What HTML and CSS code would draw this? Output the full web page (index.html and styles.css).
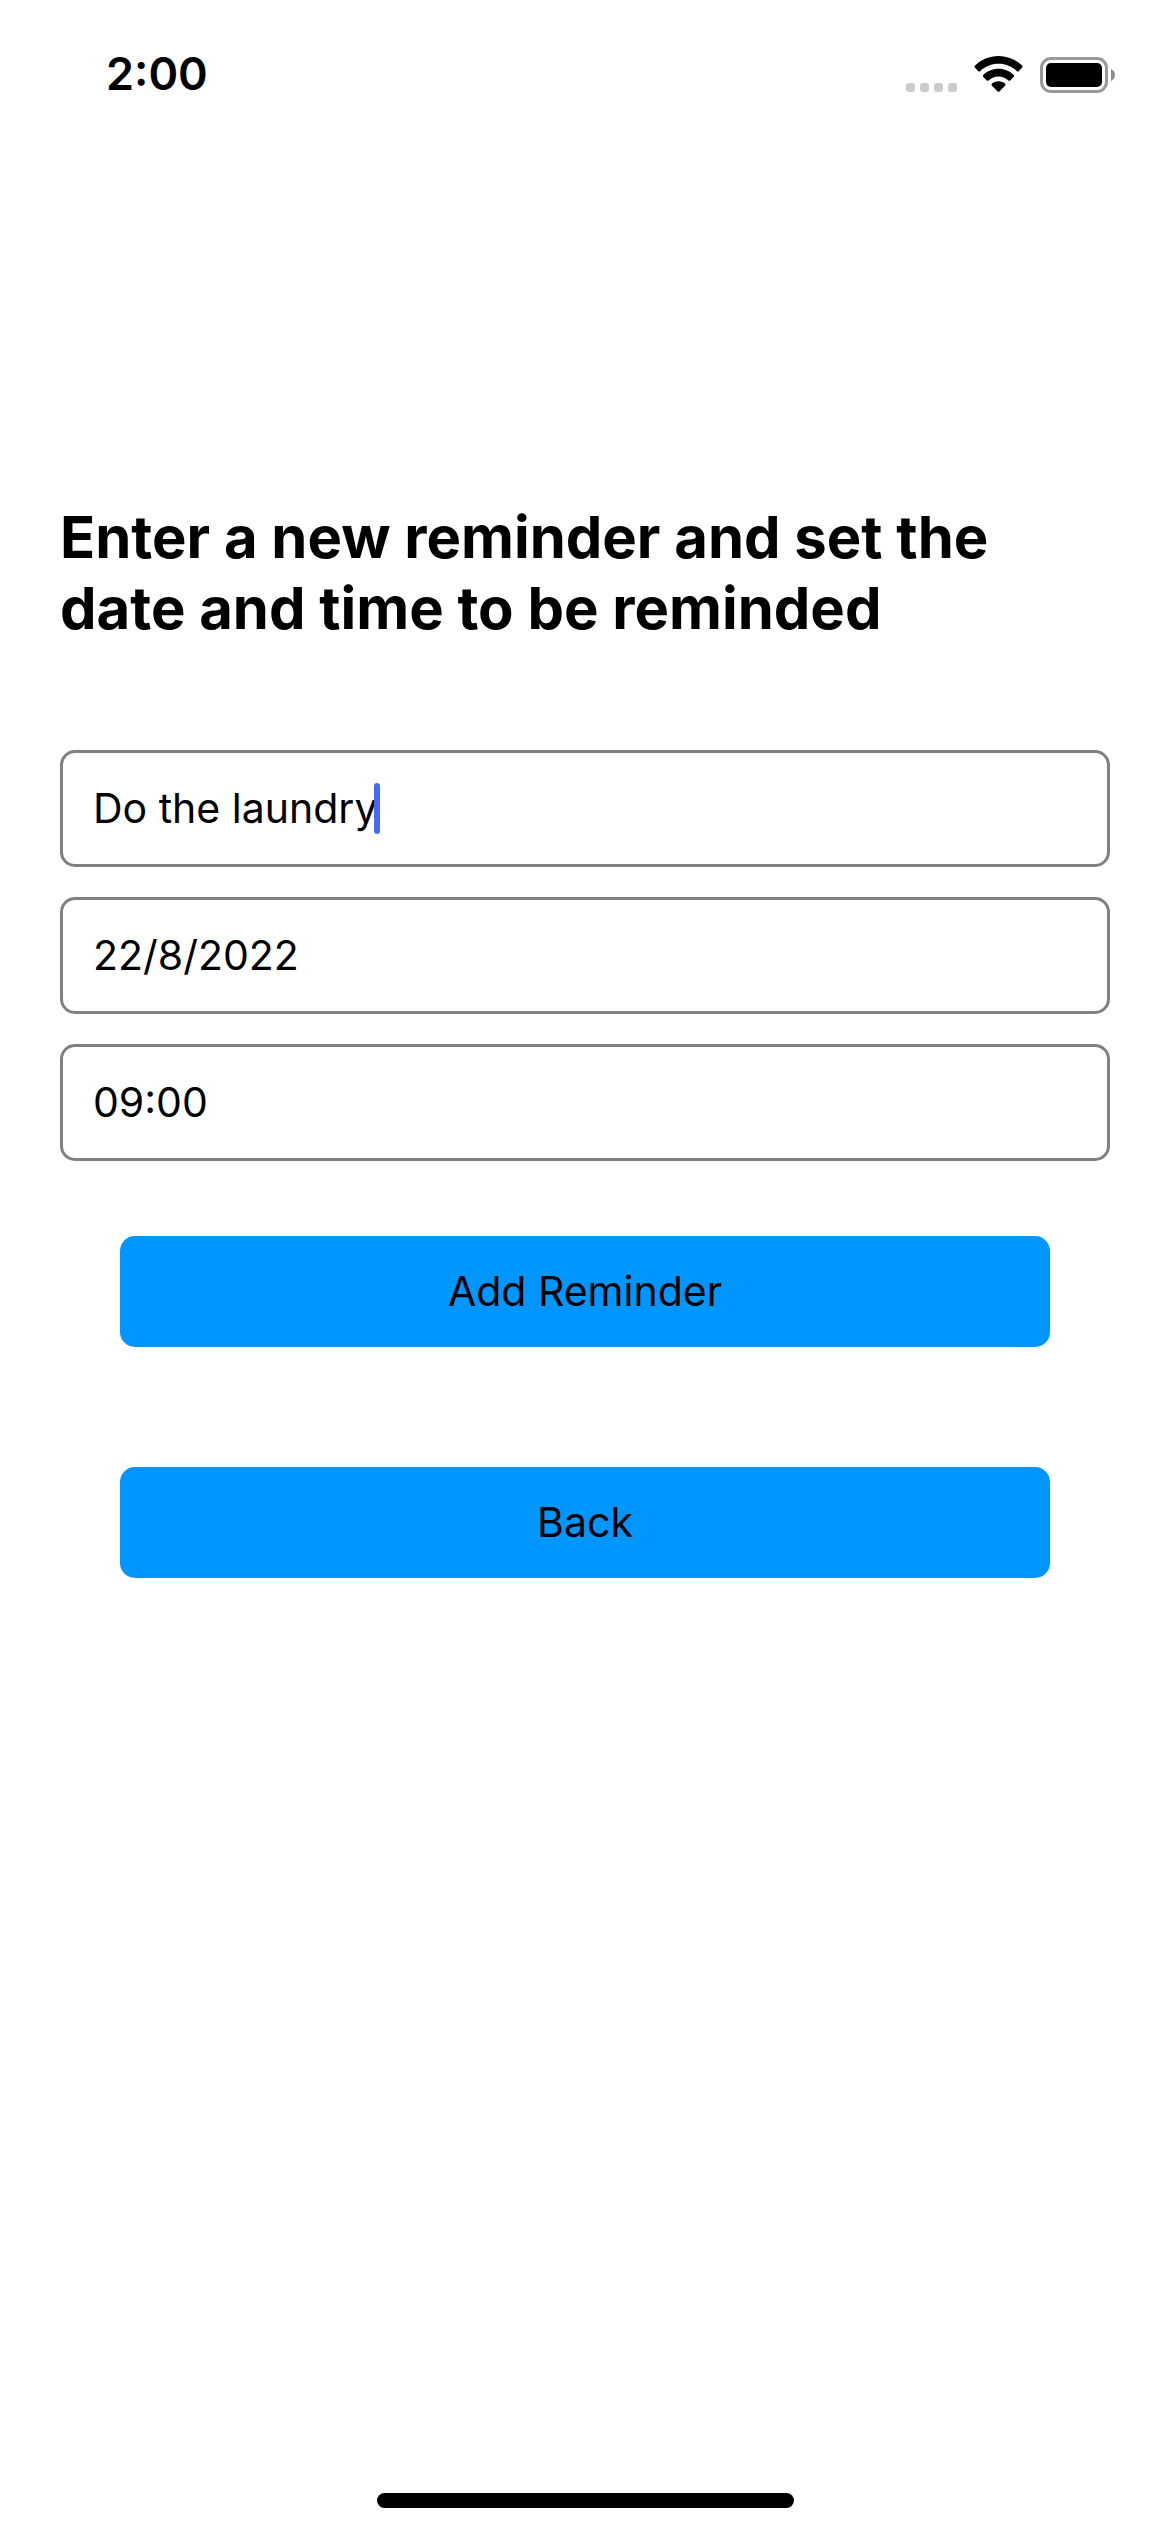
FILE: index.html
```html
<!DOCTYPE html>
<html lang="en">
<head>
  <meta charset="utf-8">
  <meta name="viewport" content="width=device-width, initial-scale=1">
  <title>New reminder</title>
  <link rel="stylesheet" href="styles.css">
</head>
<body>
  <div class="screen">
    <header class="status-bar">
      <time class="clock" datetime="02:00">2:00</time>
      <div class="status-icons">
        <svg class="icon-signal" width="51" height="10" viewBox="0 0 51 10" role="img" aria-label="No signal">
          <g fill="#cbcbcb">
            <rect x="0" width="9" height="9" rx="3"/>
            <rect x="14" width="9" height="9" rx="3"/>
            <rect x="28" width="9" height="9" rx="3"/>
            <rect x="42" width="9" height="9" rx="3"/>
          </g>
        </svg>
        <svg class="icon-wifi" width="49" height="37" viewBox="0 0 49 37" role="img" aria-label="Wi-Fi">
          <path d="M24.500 0C33.600 0 41.900 3.600 48 9.500Q49 10.600 48 11.700L44.900 15Q43.800 16 42.700 15C38 10.500 31.500 7.800 24.500 7.800S11 10.500 6.300 15Q5.200 16 4.100 15L1 11.700Q0 10.600 1 9.500C7.100 3.600 15.400 0 24.500 0Z"/>
          <path d="M24.500 12.700C30.400 12.700 35.700 15 39.600 18.800Q40.700 19.900 39.600 21L36.400 24.200Q35.300 25.200 34.200 24.200C31.600 21.900 28.200 20.500 24.500 20.500S17.400 21.900 14.800 24.200Q13.700 25.200 12.600 24.200L9.400 21Q8.300 19.900 9.400 18.800C13.300 15 18.600 12.700 24.500 12.700Z"/>
          <path d="M24.500 25.300C27 25.300 29.300 26.200 31 27.600Q32.100 28.700 31 29.800L25.600 35.200Q24.500 36.300 23.400 35.200L18 29.800Q16.900 28.700 18 27.600C19.700 26.200 22 25.300 24.500 25.300Z"/>
        </svg>
        <svg class="icon-battery" width="75" height="36" viewBox="0 0 75 36" role="img" aria-label="Battery full">
          <rect x="1.500" y="1.500" width="65" height="33" rx="9.500" fill="none" stroke="#999" stroke-width="3"/>
          <rect x="6" y="6" width="56" height="24" rx="5"/>
          <path d="M71 12Q75 14 75 18T71 24Z" fill="#8c8c8c"/>
        </svg>
      </div>
    </header>

    <main class="content">
      <h1 class="title">Enter a new reminder and set the date and time to be reminded</h1>
      <form class="form">
        <div class="field">
          <input class="input" type="text" value="Do the laundry" aria-label="Reminder">
          <span class="caret" aria-hidden="true"></span>
        </div>
        <div class="field">
          <input class="input" type="text" value="22/8/2022" aria-label="Date">
        </div>
        <div class="field">
          <input class="input" type="text" value="09:00" aria-label="Time">
        </div>
        <div class="actions">
          <button class="button" type="button">Add Reminder</button>
          <button class="button" type="button">Back</button>
        </div>
      </form>
    </main>

    <footer class="home-area">
      <div class="home-indicator"></div>
    </footer>
  </div>
</body>
</html>
```
FILE: styles.css
```css
* {
  box-sizing: border-box;
}

body {
  margin: 0;
  background: #fff;
  color: #000;
  font-family: Inter, "Liberation Sans", sans-serif;
}

.screen {
  display: flex;
  flex-direction: column;
  min-height: 100vh;
}

.status-bar {
  display: flex;
  justify-content: space-between;
  align-items: center;
  height: 148px;
  padding: 0 55px 0 106px;
}

.clock {
  font-size: 45px;
  font-weight: 600;
  line-height: 56px;
}

.status-icons {
  display: flex;
  align-items: flex-end;
  gap: 17px;
}

.content {
  flex: 1;
  padding: 354px 60px 60px;
}

.title {
  margin: 0 0 106px;
  font-size: 58px;
  font-weight: 700;
  line-height: 71px;
}

.form {
  display: flex;
  flex-direction: column;
  gap: 30px;
}

.field {
  position: relative;
}

.input {
  display: block;
  width: 100%;
  height: 117px;
  padding: 0 30px 2px;
  border: 3px solid #808080;
  border-radius: 15px;
  background: transparent;
  color: inherit;
  font: inherit;
  font-size: 41px;
}

.caret {
  position: absolute;
  top: 33px;
  left: 314px;
  width: 6px;
  height: 51px;
  border-radius: 3px;
  background: #456cf0;
}

.actions {
  display: flex;
  flex-direction: column;
  gap: 120px;
  padding: 45px 60px 0;
}

.button {
  height: 111px;
  padding: 0 0 2px;
  border: 0;
  border-radius: 15px;
  background: #0096ff;
  color: inherit;
  font: inherit;
  font-size: 41px;
}

.home-area {
  display: flex;
  justify-content: center;
  padding-bottom: 24px;
}

.home-indicator {
  width: 417px;
  height: 15px;
  border-radius: 8px;
  background: #000;
}
```
